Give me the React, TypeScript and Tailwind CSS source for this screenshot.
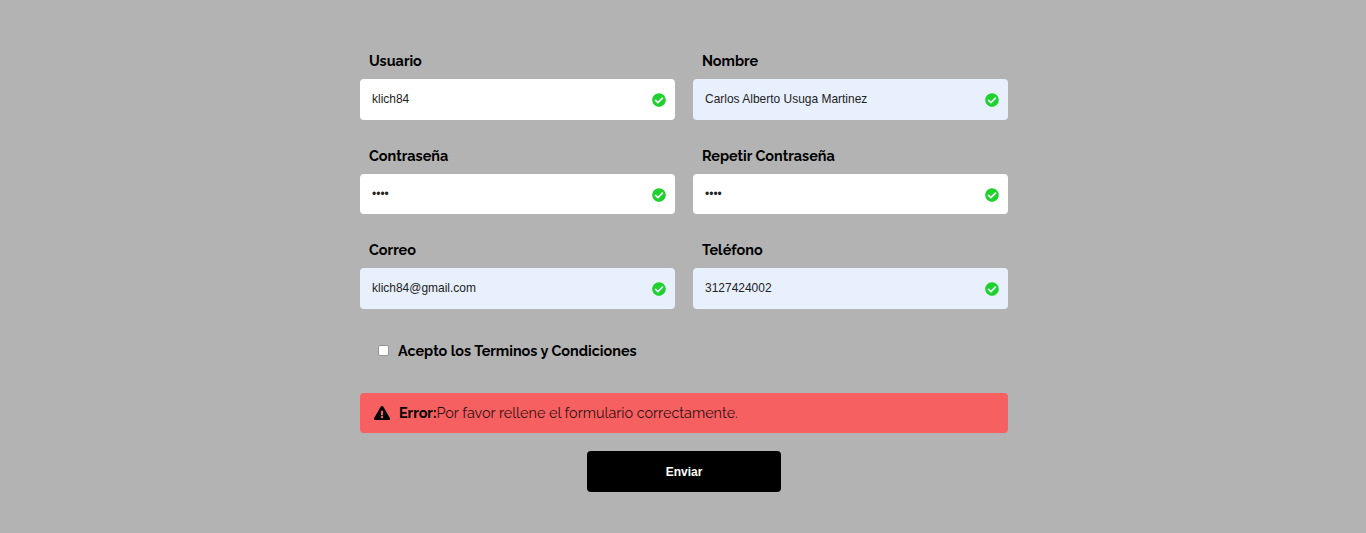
import { FaCheckCircle, FaExclamationTriangle } from "react-icons/fa";

type FieldProps = {
  label: string;
  id: string;
  value: string;
  type?: string;
  filled?: boolean;
  height?: string;
};

function Field({ label, id, value, type = "text", filled = false, height = "h-[41px]" }: FieldProps) {
  return (
    <div className="w-[315px]">
      <label
        htmlFor={id}
        className="block h-9 pt-[9px] pl-[9px] font-['Raleway',Lato,sans-serif] text-[14.4px] leading-[18px] font-bold whitespace-nowrap text-black"
      >
        {label}
      </label>
      <div
        className={`flex items-center rounded-[4px] pr-[9px] pl-3 ${height} ${filled ? "bg-[#e8f0fe]" : "bg-white"}`}
      >
        <input
          id={id}
          type={type}
          defaultValue={value}
          className="min-w-0 flex-1 bg-transparent pb-px font-['Liberation_Sans',Arial,sans-serif] text-[11.97px] leading-[18px] text-[#222] outline-none"
        />
        <FaCheckCircle className="mt-px size-[14px] shrink-0 text-[#1ed12d]" />
      </div>
    </div>
  );
}

export default function App() {
  return (
    <main className="flex h-[533px] justify-center bg-[#b3b3b3] pt-[43px] pl-[2px]">
      <form className="flex w-[648px] flex-col" onSubmit={(e) => e.preventDefault()}>
        <div className="flex h-[95px] gap-[18px]">
          <Field id="usuario" label="Usuario" value="klich84" />
          <Field id="nombre" label="Nombre" value="Carlos Alberto Usuga Martinez" filled />
        </div>
        <div className="flex h-[94px] gap-[18px]">
          <Field id="password" type="password" label="Contraseña" value="1234" height="h-10" />
          <Field id="password2" type="password" label="Repetir Contraseña" value="1234" height="h-10" />
        </div>
        <div className="flex h-[95px] gap-[18px]">
          <Field id="correo" label="Correo" value="klich84@gmail.com" filled />
          <Field id="telefono" label="Teléfono" value="3127424002" filled />
        </div>
        <label className="flex h-[66px] items-start pt-[15px] pl-[18px] font-['Raleway',Lato,sans-serif] text-[14.4px] leading-[18px] font-bold whitespace-nowrap text-black">
          <input
            type="checkbox"
            className="mt-[3px] mr-[9px] size-[11px] appearance-none rounded-[2px] border border-[#959595] bg-white"
          />
          Acepto los Terminos y Condiciones
        </label>
        <div className="flex h-10 items-center rounded-[4px] bg-[#f66060] pl-[14px] font-['Raleway',Lato,sans-serif] text-[14.4px] leading-[18px] text-black">
          <FaExclamationTriangle className="mr-[9px] mb-px size-4 shrink-0" />
          <b>Error:</b>
          <span className="whitespace-nowrap text-black/85">Por favor rellene el formulario correctamente.</span>
        </div>
        <button className="mt-[18px] h-[41px] w-[194px] self-center rounded-[4px] bg-black font-['Liberation_Sans',Arial,sans-serif] text-[12px] font-bold text-white">
          Enviar
        </button>
      </form>
    </main>
  );
}
